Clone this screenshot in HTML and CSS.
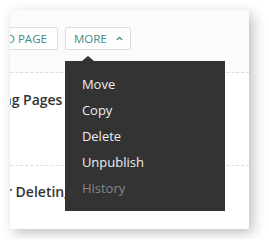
FILE: index.html
```html
<!DOCTYPE html>
<html>
	<head>
		<link rel="stylesheet" href="styles.css">
	</head>
	<body>
		<section class="card">
			<div class="inner">
				<header class="toolbar">
					<button class="btn">Add Page</button>
					<div class="more">
						<button class="btn btn-more">More
							<svg class="caret" width="7" height="5" viewBox="0 0 7 5"><path d="M0.8 4 L3.5 1.3 L6.2 4" fill="none" stroke="currentColor" stroke-width="1.2"/></svg>
						</button>
						<ul class="menu">
							<li>Move</li>
							<li>Copy</li>
							<li>Delete</li>
							<li>Unpublish</li>
							<li class="disabled">History</li>
						</ul>
					</div>
				</header>

				<div class="row first">
					<h3>Listing Pages</h3>
				</div>
				<div class="row second">
					<h3>After Deleting Pages</h3>
				</div>
			</div>
		</section>
	</body>
</html>
```

FILE: styles.css
```css
body {
	margin: 0;
	padding: 10px;
	background-color: #fff;
	font-family: "Open Sans", Arial, sans-serif;
}
.card {
	width: 239px;
	height: 219px;
	background-color: #fff;
	box-shadow: 4px 4px 12px rgba(0, 0, 0, 0.25);
	overflow: hidden;
}
.inner {
	margin-left: -35px;
	width: 400px;
}

.toolbar {
	display: flex;
	gap: 7px;
	height: 63px;
	padding-top: 17px;
	padding-left: 6px;
	box-sizing: border-box;
	background-color: #fbfbfb;
	border-bottom: 1px dashed #ddd;
}
.btn {
	display: flex;
	align-items: center;
	gap: 9px;
	height: 23px;
	padding: 0 10px 0 9px;
	font-family: "Open Sans", Arial, sans-serif;
	font-size: 11.5px;
	color: #3e8a8a;
	text-transform: uppercase;
	background-color: #fff;
	border: 1px solid #ddd;
	border-radius: 2px;
}
.btn-more {
	padding: 0 7px 0 8px;
}
.caret {
	margin-top: -1px;
}

.more {
	position: relative;
}
.menu {
	position: absolute;
	top: 34px;
	left: 0;
	width: 160px;
	margin: 0;
	padding: 10px 0;
	list-style: none;
	background-color: #333;
	z-index: 2;
}
.menu::before {
	content: "";
	position: absolute;
	top: -5px;
	left: 17px;
	border-left: 6px solid transparent;
	border-right: 6px solid transparent;
	border-bottom: 5px solid #333;
}
.menu li {
	padding: 0 17px;
	line-height: 26px;
	font-size: 13px;
	color: #eee;
}
.menu li.disabled {
	color: #888;
}

.row h3 {
	margin: 0;
	font-size: 14px;
	line-height: 20px;
	font-weight: 600;
	color: #333;
	white-space: nowrap;
}
.row.first {
	height: 93px;
	padding-top: 17px;
	box-sizing: border-box;
	border-bottom: 1px dashed #ddd;
}
.row.second {
	padding-top: 16px;
	padding-left: 3px;
}
```
